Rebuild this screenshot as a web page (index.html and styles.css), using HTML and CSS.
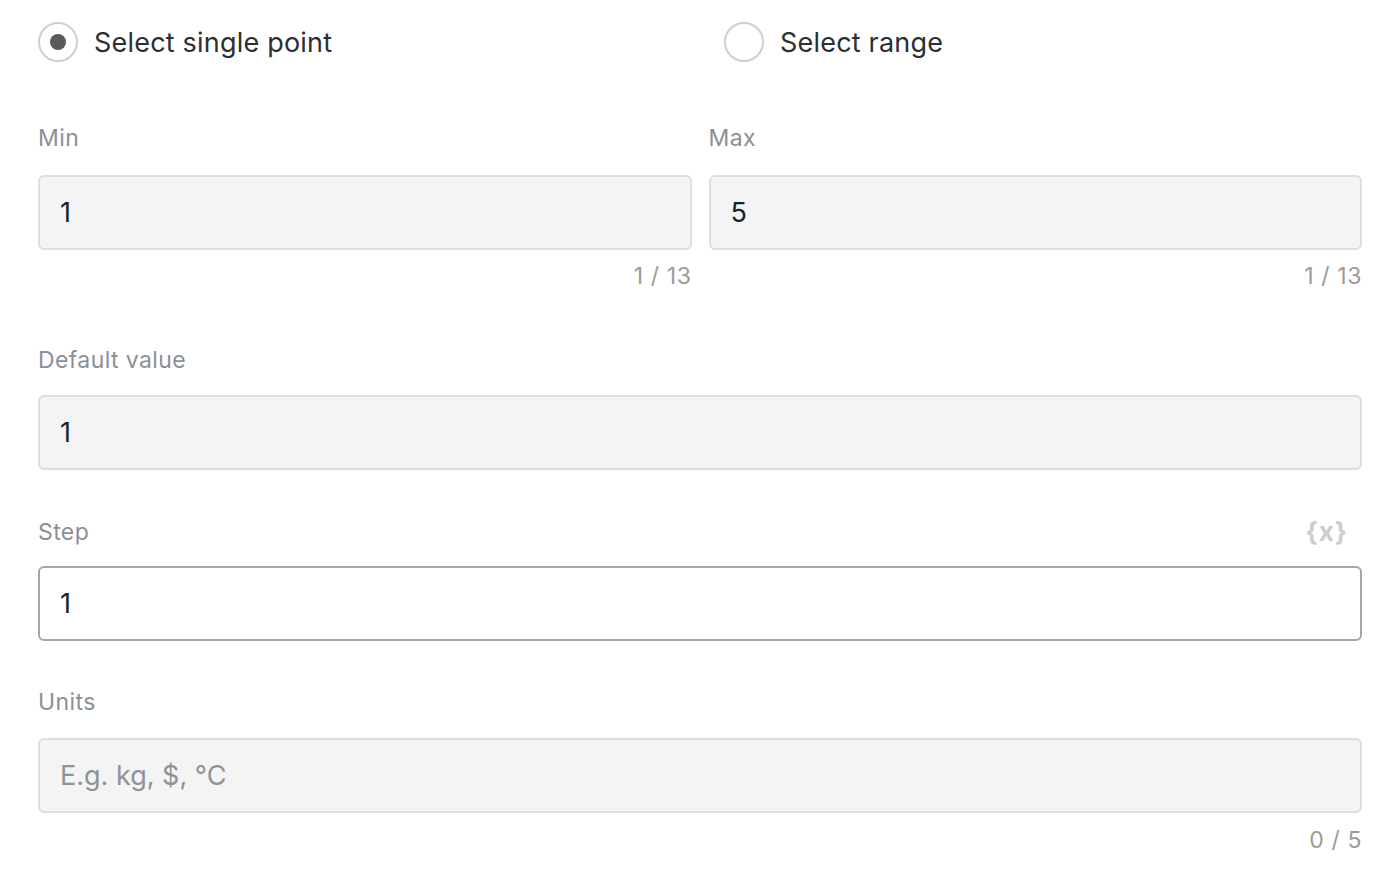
FILE: index.html
```html
<!DOCTYPE html>
<html lang="en">
<head>
  <meta charset="UTF-8">
  <title>Slider settings</title>
  <link rel="stylesheet" href="styles.css">
</head>
<body>

<div class="form">
  <div class="mode-row">
    <label class="radio">
      <span class="radio-dot checked"></span>
      <span>Select single point</span>
    </label>
    <label class="radio">
      <span class="radio-dot"></span>
      <span>Select range</span>
    </label>
  </div>

  <div class="pair">
    <div class="field">
      <div class="field-label">Min</div>
      <input class="text-input" type="text" value="1">
      <div class="counter">1 / 13</div>
    </div>
    <div class="field">
      <div class="field-label">Max</div>
      <input class="text-input" type="text" value="5">
      <div class="counter">1 / 13</div>
    </div>
  </div>

  <div class="field default-field">
    <div class="field-label">Default value</div>
    <input class="text-input" type="text" value="1">
  </div>

  <div class="field step-field">
    <div class="field-label">
      <span>Step</span>
      <span class="var-icon">{x}</span>
    </div>
    <input class="text-input focused" type="text" value="1">
  </div>

  <div class="field units-field">
    <div class="field-label">Units</div>
    <input class="text-input" type="text" placeholder="E.g. kg, $, °C">
    <div class="counter">0 / 5</div>
  </div>
</div>

</body>
</html>
```

FILE: styles.css
```css
body {
  margin: 0;
  background: #fff;
  font-family: Inter, "Noto Sans", Arial, sans-serif;
  color: #2b2f33;
}
.form {
  padding: 22px 34px 0 38px;
}
.mode-row {
  display: grid;
  grid-template-columns: 686px 1fr;
}
.radio {
  display: flex;
  align-items: center;
  gap: 16px;
  font-size: 27px;
  letter-spacing: 0.2px;
  height: 40px;
}
.radio-dot {
  width: 36px;
  height: 36px;
  border: 2px solid #cfcfcf;
  border-radius: 50%;
  display: flex;
  align-items: center;
  justify-content: center;
}
.radio-dot.checked::after {
  content: "";
  width: 16px;
  height: 16px;
  border-radius: 50%;
  background: #5a5a5a;
}
.pair {
  display: grid;
  grid-template-columns: 1fr 1fr;
  gap: 17px;
  margin-top: 60px;
}
.field-label {
  display: flex;
  justify-content: space-between;
  align-items: center;
  font-size: 23px;
  letter-spacing: 0.4px;
  line-height: 30px;
  color: #8b9097;
  padding-top: 1px;
  margin-bottom: 22px;
}
.text-input {
  display: block;
  box-sizing: border-box;
  width: 100%;
  height: 75px;
  padding: 0 20px;
  font-family: inherit;
  font-size: 27px;
  color: #142230;
  background: #f4f4f4;
  border: 2px solid #dedede;
  border-radius: 6px;
  outline: none;
}
.text-input::placeholder {
  color: #8e939a;
}
.text-input.focused {
  background: #fff;
  border-color: #a2a6ad;
}
.counter {
  text-align: right;
  font-size: 23px;
  letter-spacing: 0.6px;
  line-height: 30px;
  color: #9b9b9b;
  margin-top: 11px;
}
.default-field {
  margin-top: 53px;
}
.default-field .field-label {
  margin-bottom: 20px;
}
.step-field {
  margin-top: 46px;
}
.step-field .field-label {
  margin-bottom: 19px;
}
.var-icon {
  font-size: 26px;
  font-weight: 700;
  color: #cdcdcd;
  padding-right: 14px;
  letter-spacing: 1px;
}
.units-field {
  margin-top: 45px;
}
.units-field .field-label {
  margin-bottom: 21px;
}
.units-field .counter {
  margin-top: 12px;
}
```
